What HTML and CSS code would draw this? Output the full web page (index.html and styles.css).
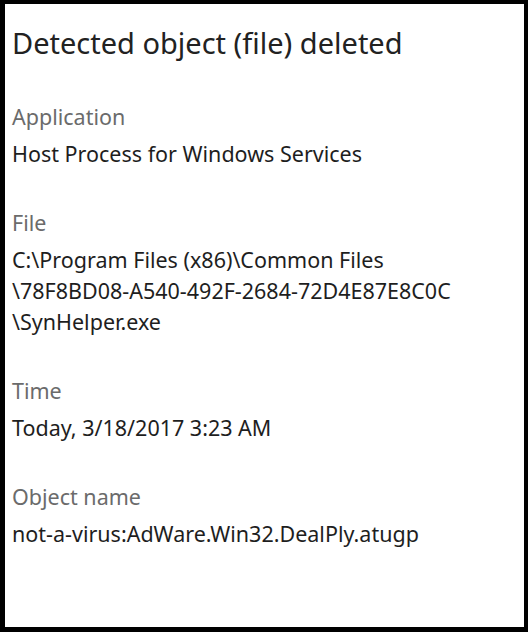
FILE: index.html
```html
<!DOCTYPE html>
<html lang="en">
<head>
<meta charset="utf-8">
<title>Detected object (file) deleted</title>
<link rel="stylesheet" href="styles.css">
</head>
<body>
<div class="panel">
  <h1 class="title">Detected object (file) deleted</h1>
  <div class="field">
    <div class="label">Application</div>
    <div class="value">Host Process for Windows Services</div>
  </div>
  <div class="field">
    <div class="label">File</div>
    <div class="value">C:\Program Files (x86)\Common Files<br>\78F8BD08-A540-492F-2684-72D4E87E8C0C<br>\SynHelper.exe</div>
  </div>
  <div class="field">
    <div class="label">Time</div>
    <div class="value">Today, 3/18/2017 3:23 AM</div>
  </div>
  <div class="field">
    <div class="label">Object name</div>
    <div class="value">not-a-virus:AdWare.Win32.DealPly.atugp</div>
  </div>
</div>
</body>
</html>
```
FILE: styles.css
```css
html, body {
  margin: 0;
  padding: 0;
  background: #ffffff;
}
.panel {
  box-sizing: border-box;
  width: 528px;
  height: 632px;
  border-style: solid;
  border-color: #000000;
  border-width: 4px 4px 5px 5px;
  padding: 19px 7px 0 7px;
  font-family: "Noto Sans", "Open Sans", sans-serif;
  display: flex;
  flex-direction: column;
  gap: 38px;
}
.title {
  margin: 0;
  font-size: 29px;
  font-weight: 400;
  line-height: 40px;
  color: #222222;
}
.field {
  display: flex;
  flex-direction: column;
  gap: 6px;
}
.label {
  font-size: 21.5px;
  line-height: 31px;
  color: #6b6b6b;
}
.value {
  font-size: 21.5px;
  line-height: 31px;
  color: #1e1e1e;
}
```
